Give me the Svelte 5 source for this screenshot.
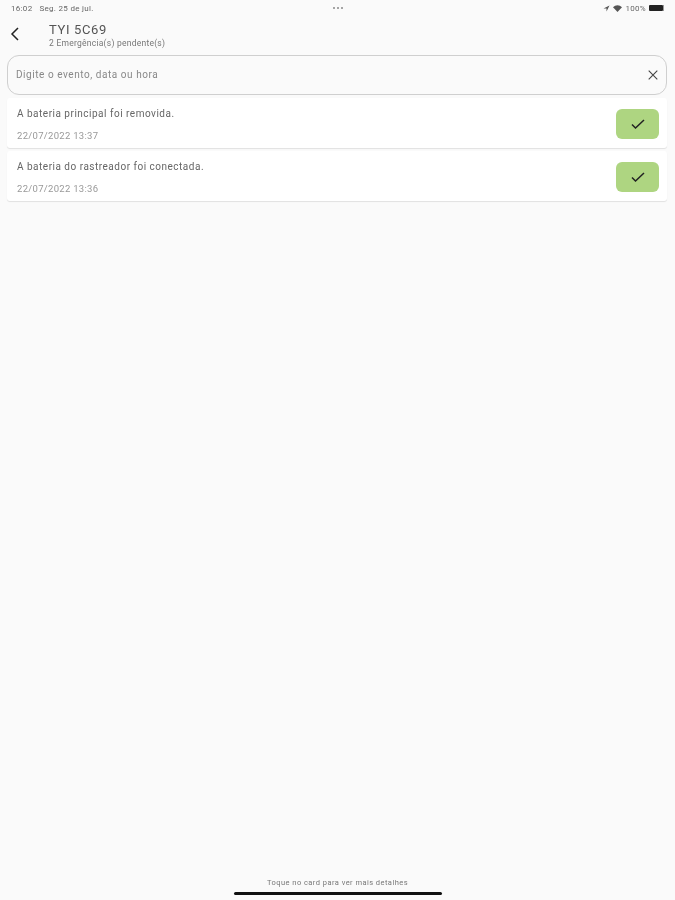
<script>
  let events = [
    { title: 'A bateria principal foi removida.', date: '22/07/2022 13:37' },
    { title: 'A bateria do rastreador foi conectada.', date: '22/07/2022 13:36' }
  ];
</script>

<div class="page">
  <div class="status">
    <div class="status-left"><span>16:02</span><span>Seg. 25 de jul.</span></div>
    <div class="dots"><i></i><i></i><i></i></div>
    <div class="status-right">
      <svg width="7" height="7" viewBox="0 0 7 7"><path d="M6.5 .5 .5 3.4h3v3z" fill="#555" /></svg>
      <svg width="9" height="7" viewBox="0 0 9 7"><path d="M0 2.2a6.4 6.4 0 0 1 9 0L4.5 7z" fill="#555" /></svg>
      <span>100%</span>
      <div class="battery"><div class="battery-fill"></div></div>
    </div>
  </div>

  <header class="header">
    <button class="back" aria-label="Voltar">
      <svg width="10" height="14" viewBox="0 0 10 14"><path d="M8 1 2 7l6 6" fill="none" stroke="#222" stroke-width="1.5" /></svg>
    </button>
    <div class="titles">
      <div class="title">TYI 5C69</div>
      <div class="subtitle">2 Emergência(s) pendente(s)</div>
    </div>
  </header>

  <div class="search">
    <span class="placeholder">Digite o evento, data ou hora</span>
    <svg width="10" height="10" viewBox="0 0 10 10"><path d="M.7.7l8.6 8.6M9.3.7.7 9.3" stroke="#444" stroke-width="1.1" /></svg>
  </div>

  <div class="list">
    {#each events as event}
      <div class="card">
        <div class="card-text">
          <div class="card-title">{event.title}</div>
          <div class="card-date">{event.date}</div>
        </div>
        <button class="confirm" aria-label="Confirmar">
          <svg width="14" height="10" viewBox="0 0 14 10"><path d="M1 5.5l3.5 3.5L13 1" fill="none" stroke="#222" stroke-width="1.5" /></svg>
        </button>
      </div>
    {/each}
  </div>

  <div class="footer">
    <div class="hint">Toque no card para ver mais detalhes</div>
    <div class="home-bar"></div>
  </div>
</div>

<style>
  :global(body) {
    margin: 0;
    background: #fafafa;
  }

  .page {
    height: 900px;
    display: flex;
    flex-direction: column;
    box-sizing: border-box;
    padding: 0 8px 0 7px;
    background: #fafafa;
    font-family: Roboto, "Liberation Sans", sans-serif;
    overflow: hidden;
    filter: blur(0.4px);
  }

  .status {
    height: 16px;
    display: flex;
    align-items: center;
    justify-content: space-between;
    padding: 0 3px 0 4px;
    font-size: 8px;
    letter-spacing: 0.3px;
    color: #666;
  }

  .status-left {
    flex: 1;
    display: flex;
    gap: 7px;
  }

  .status-right {
    flex: 1;
    display: flex;
    align-items: center;
    justify-content: flex-end;
    gap: 3px;
  }

  .dots {
    display: flex;
    gap: 2px;
  }

  .dots i {
    width: 2px;
    height: 2px;
    border-radius: 50%;
    background: #888;
  }

  .battery {
    width: 15px;
    height: 6px;
    border-right: 1px solid #999;
    box-sizing: border-box;
  }

  .battery-fill {
    height: 100%;
    background: #222;
    border-radius: 1px;
  }

  .header {
    height: 39px;
    display: flex;
    align-items: flex-start;
    box-sizing: border-box;
    padding-top: 6px;
  }

  .back {
    width: 42px;
    margin-top: 5px;
    padding: 0 0 0 3px;
    border: none;
    background: none;
    display: flex;
    align-items: center;
  }

  .title {
    margin-bottom: 1px;
    font-size: 13px;
    line-height: 15px;
    letter-spacing: 0.65px;
    color: #555;
  }

  .subtitle {
    font-size: 8.5px;
    line-height: 10px;
    letter-spacing: 0.25px;
    color: #777;
  }

  .search {
    height: 40px;
    display: flex;
    align-items: center;
    justify-content: space-between;
    box-sizing: border-box;
    padding: 0 8px 2px;
    border: 1px solid #cfcfcf;
    border-radius: 12px;
  }

  .placeholder {
    font-size: 10px;
    letter-spacing: 0.55px;
    color: #888;
  }

  .search svg {
    margin-top: 2px;
  }

  .list {
    display: flex;
    flex-direction: column;
    gap: 3px;
    margin-top: 3px;
  }

  .card {
    height: 50px;
    display: flex;
    align-items: center;
    justify-content: space-between;
    box-sizing: border-box;
    padding: 0 8px 0 10px;
    background: #fff;
    border-radius: 3px;
    box-shadow: 0 1px 1px rgba(0, 0, 0, 0.1);
  }

  .card-text {
    padding-top: 4px;
  }

  .card-title {
    font-size: 10px;
    line-height: 12px;
    letter-spacing: 0.5px;
    color: #666;
  }

  .card-date {
    margin-top: 10px;
    font-size: 9.5px;
    line-height: 12px;
    letter-spacing: 0.3px;
    color: #999;
  }

  .confirm {
    width: 43px;
    height: 30px;
    margin-top: 2px;
    padding: 0;
    border: none;
    border-radius: 6px;
    background: #aed581;
    display: flex;
    align-items: center;
    justify-content: center;
  }

  .footer {
    margin-top: auto;
    display: flex;
    flex-direction: column;
    align-items: center;
    padding-left: 1px;
    padding-bottom: 5px;
  }

  .hint {
    font-size: 7.5px;
    line-height: 10px;
    letter-spacing: 0.45px;
    color: #777;
  }

  .home-bar {
    width: 208px;
    height: 3px;
    margin-top: 4px;
    background: #111;
    border-radius: 2px;
  }
</style>
